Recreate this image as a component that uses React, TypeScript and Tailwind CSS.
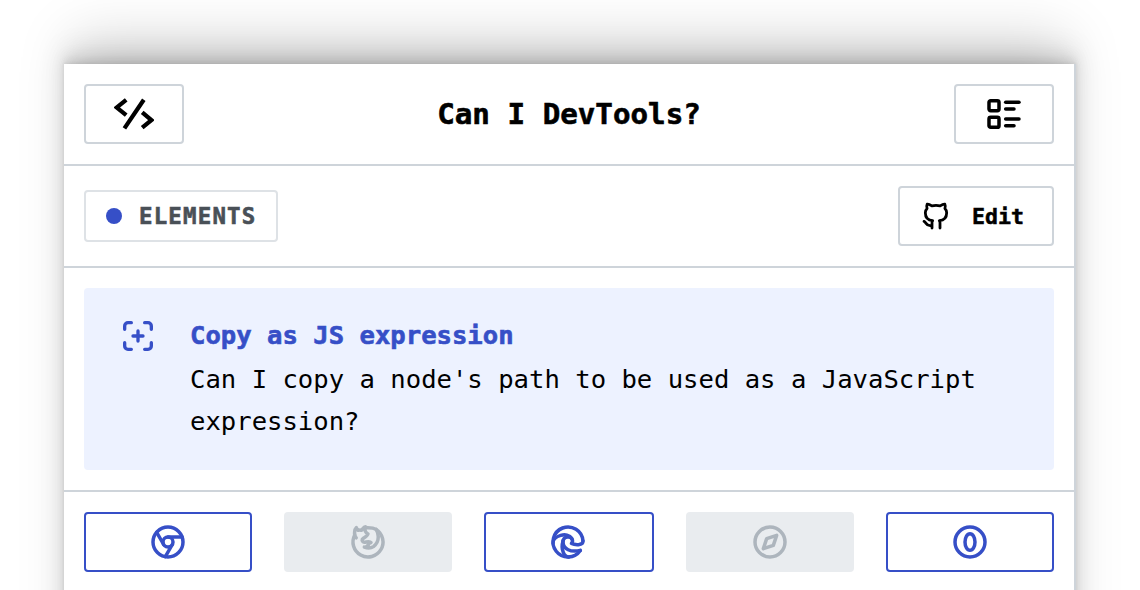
import React from "react";
import {
  TbBrandChrome,
  TbBrandFirefox,
  TbBrandEdge,
  TbBrandSafari,
  TbBrandOpera,
  TbBrandGithub,
  TbListDetails,
} from "react-icons/tb";

const supportedStyle =
  "flex h-[60px] w-[168px] items-center justify-center rounded-[4px] border-2 border-[#364fc7] text-[#364fc7]";
const wideSupportedStyle =
  "flex h-[60px] w-[170px] items-center justify-center rounded-[4px] border-2 border-[#364fc7] pr-0.5 text-[#364fc7]";
const unsupportedStyle =
  "flex h-[60px] w-[168px] items-center justify-center rounded-[4px] bg-[#e9ecef] text-[#adb5bd]";

const browsers = [
  { name: "Chrome", Icon: TbBrandChrome, style: supportedStyle },
  { name: "Firefox", Icon: TbBrandFirefox, style: unsupportedStyle },
  { name: "Edge", Icon: TbBrandEdge, style: wideSupportedStyle },
  { name: "Safari", Icon: TbBrandSafari, style: unsupportedStyle },
  { name: "Opera", Icon: TbBrandOpera, style: supportedStyle },
];

function CodeIcon() {
  return (
    <svg width="40" height="32" viewBox="0 0 40 32" fill="none" stroke="currentColor" strokeWidth="4.2">
      <path d="M12.2 1.8 2.8 9.5l9.4 7.7M10.4 30.4 29.8 1.8M28.2 14.4l9.2 7.7-9.2 7.6" />
    </svg>
  );
}

function ScanIcon() {
  return (
    <svg width="40" height="40" viewBox="0 0 24 24" fill="none" stroke="currentColor" strokeWidth="2" strokeLinecap="round" strokeLinejoin="round">
      <path d="M4 8V6a2 2 0 0 1 2-2h2M4 16v2a2 2 0 0 0 2 2h2M16 4h2a2 2 0 0 1 2 2v2M16 20h2a2 2 0 0 0 2-2v-2M9 12h6M12 9v6" />
    </svg>
  );
}

export default function App() {
  return (
    <div className="h-[590px] w-[1140px] overflow-hidden bg-white pl-16 pt-16 font-['DejaVu_Sans_Mono',monospace] text-black">
      <main className="h-[1200px] w-[1012px] border-r-2 border-[#ced4da] bg-white shadow-[0_-1px_3px_rgba(0,0,0,0.05),0_-4px_7px_rgba(0,0,0,0.05),0_-8px_14px_rgba(0,0,0,0.07),0_-15px_26px_rgba(0,0,0,0.09),0_-36px_52px_-8px_rgba(0,0,0,0.15)]">
        <header className="flex h-[102px] items-center justify-between border-b-2 border-[#ced4da] px-5">
          <button className="flex h-[60px] w-[100px] items-center justify-center rounded-[4px] border-2 border-[#ced4da]">
            <CodeIcon />
          </button>
          <h1 className="text-[29.2px] leading-10 font-bold [-webkit-text-stroke:0.6px]">Can I DevTools?</h1>
          <button className="flex h-[60px] w-[100px] items-center justify-center rounded-[4px] border-2 border-[#ced4da]">
            <TbListDetails size={40} strokeWidth={2.1} />
          </button>
        </header>

        <div className="flex h-[102px] items-center justify-between border-b-2 border-[#ced4da] px-5">
          <div className="flex h-[52px] w-[194px] items-center gap-4 rounded-[4px] border-2 border-[#dee2e6] pl-5 text-[#495057]">
            <span className="size-4 rounded-full bg-[#364fc7]" />
            <span className="pl-px text-[22.4px] leading-8 font-bold tracking-[1.2px] [-webkit-text-stroke:0.6px]">ELEMENTS</span>
          </div>
          <button className="flex h-[60px] w-[156px] items-center gap-5 rounded-[4px] border-2 border-[#ced4da] pl-5">
            <TbBrandGithub size={32} strokeWidth={2.1} />
            <span className="pt-0.5 text-[21.6px] leading-8 font-bold [-webkit-text-stroke:0.5px]">Edit</span>
          </button>
        </div>

        <div className="border-b-2 border-[#ced4da] p-5">
          <section className="flex h-[182px] gap-8 rounded-[4px] bg-[#edf2ff] pt-[26px] pl-[34px]">
            <div className="pt-0.5 text-[#364fc7]">
              <ScanIcon />
            </div>
            <div className="w-[810px] text-[25.6px] leading-[42px]">
              <h2 className="mb-0.5 font-bold text-[#364fc7] [-webkit-text-stroke:0.6px]">Copy as JS expression</h2>
              <p>Can I copy a node's path to be used as a JavaScript expression?</p>
            </div>
          </section>
        </div>

        <div className="flex justify-between p-5">
          {browsers.map(({ name, Icon, style }) => (
            <button key={name} aria-label={name} className={style}>
              <Icon size={40} strokeWidth={2.1} />
            </button>
          ))}
        </div>
      </main>
    </div>
  );
}
